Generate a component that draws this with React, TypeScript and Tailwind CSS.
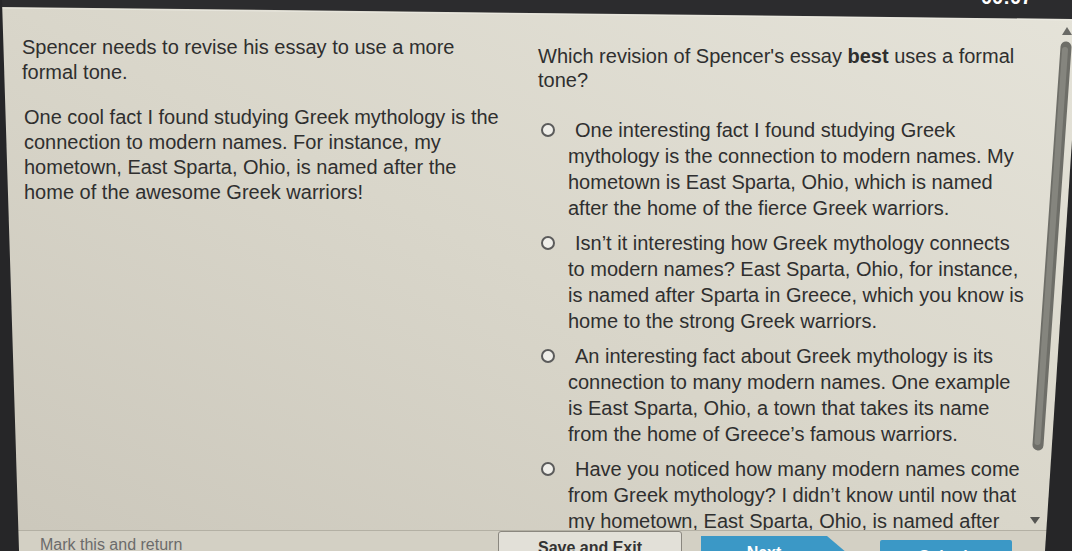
import React from "react";

const options: string[] = [
  "One interesting fact I found studying Greek mythology is the connection to modern names. My hometown is East Sparta, Ohio, which is named after the home of the fierce Greek warriors.",
  "Isn’t it interesting how Greek mythology connects to modern names? East Sparta, Ohio, for instance, is named after Sparta in Greece, which you know is home to the strong Greek warriors.",
  "An interesting fact about Greek mythology is its connection to many modern names. One example is East Sparta, Ohio, a town that takes its name from the home of Greece’s famous warriors.",
  "Have you noticed how many modern names come from Greek mythology? I didn’t know until now that my hometown, East Sparta, Ohio, is named after the home of the Greek warriors.",
];

export default function App() {
  return (
    <div className="relative w-[1072px] h-[551px] overflow-hidden bg-linear-to-tr from-[#cbc7bb] via-[#d9d6ca] to-[#e5e3d9] font-['Liberation_Sans',Arial,sans-serif] text-[#2f2f2f]">
      <div className="flex h-[530px] overflow-hidden">
        <div className="w-[538px] shrink-0 pl-[22px] pt-[35px]">
          <div className="w-[482px] text-[20px] leading-[25px]">
            <p>Spencer needs to revise his essay to use a more formal tone.</p>
            <p className="mt-[20px] pl-[2px]">
              One cool fact I found studying Greek mythology is the connection to modern names. For instance, my hometown, East Sparta, Ohio, is named after the home of the awesome Greek warriors!
            </p>
          </div>
        </div>
        <div className="w-[490px] shrink-0 pt-[44px] text-[20px]">
          <p className="leading-[24px]">
            Which revision of Spencer's essay <span className="font-bold">best</span> uses a formal tone?
          </p>
          <div className="mt-[25px] flex flex-col gap-[9px]">
            {options.map((o, i) => (
              <div key={i} className="flex items-start leading-[26px]">
                <span className="ml-[3px] mt-[6px] w-[14px] h-[14px] shrink-0 rounded-full border-2 border-[#5b5b5b] bg-[#efeee9]" />
                <p className="ml-[13px] w-[459px] indent-[7px]">{o}</p>
              </div>
            ))}
          </div>
        </div>
      </div>

      <div className="flex h-[21px] items-start border-t border-[#b3b0a4] bg-[#d3d0c4]">
        <div className="w-[498px] shrink-0 pl-[40px] pt-[4px] text-[16px] leading-[20px] text-[#6b6b6b]">
          Mark this and return
        </div>
        <div className="mt-[0px] flex h-[34px] w-[184px] shrink-0 items-center justify-center rounded-[3px] border border-[#8a877f] bg-[#e2e0d8] text-[16px] font-bold text-[#333]">
          Save and Exit
        </div>
        <div className="ml-[19px] mt-[5px] flex h-[34px] w-[146px] shrink-0 items-center justify-center bg-[#3b98c6] pr-[20px] text-[16px] font-bold text-white [clip-path:polygon(0_0,calc(100%-20px)_0,100%_50%,calc(100%-20px)_100%,0_100%)]">
          Next
        </div>
        <div className="ml-[33px] mt-[9px] flex h-[34px] w-[132px] shrink-0 items-center justify-center rounded-[2px] bg-[#3b98c6] text-[16px] font-bold text-white">
          Submit
        </div>
      </div>

      <svg className="pointer-events-none absolute inset-0" width="1072" height="551" viewBox="0 0 1072 551">
        <polygon points="0,0 1072,0 1072,19 0,7" fill="#2c2c2e" />
        <line x1="0" y1="8" x2="1072" y2="20" stroke="#f2f1ea" strokeWidth="1" opacity="0.6" />
        <polygon points="1072,140 1045,551 1072,551" fill="#262628" />
        <polygon points="0,0 2,0 19,551 0,551" fill="#262628" />
        <line x1="1066" y1="47" x2="1038" y2="445" stroke="#6e6e68" strokeWidth="11" strokeLinecap="round" />
        <line x1="1065" y1="50" x2="1037.5" y2="442" stroke="#85857e" strokeWidth="6" strokeLinecap="round" />
        <polygon points="1062,35 1067,27 1072,35" fill="#6a6a66" />
        <polygon points="1030,517 1040,517 1035,524" fill="#555552" />
      </svg>
      <span className="absolute left-[981px] top-[-13px] text-[20px] font-bold leading-[20px] text-white">00:07</span>
    </div>
  );
}
